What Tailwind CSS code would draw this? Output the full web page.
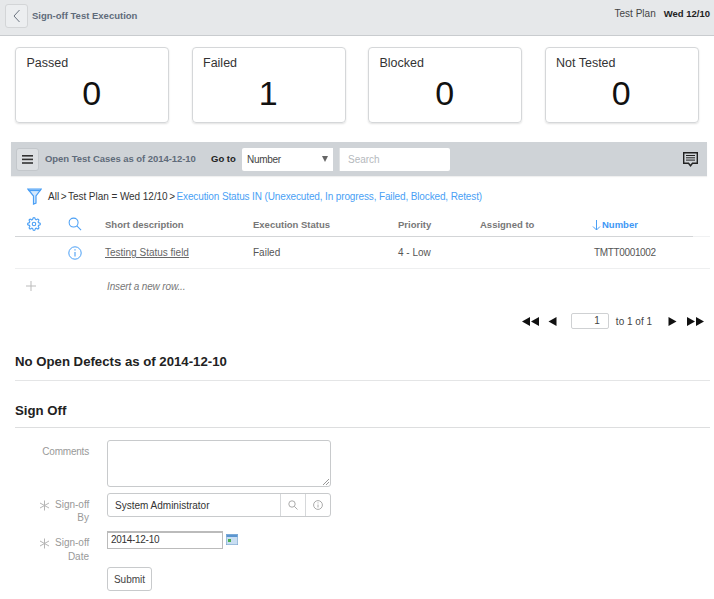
<!DOCTYPE html>
<html><head><meta charset="utf-8">
<script src="https://cdn.jsdelivr.net/npm/@tailwindcss/browser@4"></script>
</head>
<body class="bg-white font-['Liberation_Sans',Arial,sans-serif] text-[#333] w-[714px] h-[599px] overflow-hidden">
<header class="h-9 bg-[#e6e8ea] border-b border-[#c9cccf] flex items-start pl-[5px] pr-[4px]">
  <button class="mt-[4px] w-[23px] h-[24px] border border-[#d3d5d7] rounded-[3px] bg-[#eceef0] flex items-center justify-center">
    <svg width="8" height="14" viewBox="0 0 8 14" fill="none" stroke="#6b7480" stroke-width="1"><path d="M6.5 1 L1 7 L6.5 13"/></svg>
  </button>
  <span class="mt-[10px] leading-[12px] ml-[4px] text-[9.5px] font-bold text-[#5f6b7a]">Sign-off Test Execution</span>
  <span class="mt-[8px] leading-[12px] ml-auto text-[10px] text-[#444]">Test Plan</span>
  <span class="mt-[8px] leading-[12px] ml-[8px] text-[9.5px] font-bold text-[#222]">Wed 12/10</span>
</header>
<section class="flex pl-[15px] pt-[11px] gap-[22.5px]">
  <div class="w-[154px] h-[76px] border border-[#d5d7d9] rounded-[4px] shadow-[0_1px_2px_rgba(0,0,0,0.12)] pl-[10.5px] pt-[8px]"><div class="text-[12.5px] leading-[15px] text-[#333]">Passed</div><div class="text-[34px] leading-[37px] text-center text-[#111] pr-[11px] mt-[4px]">0</div></div>
  <div class="w-[154px] h-[76px] border border-[#d5d7d9] rounded-[4px] shadow-[0_1px_2px_rgba(0,0,0,0.12)] pl-[10.5px] pt-[8px]"><div class="text-[12.5px] leading-[15px] text-[#333]">Failed</div><div class="text-[34px] leading-[37px] text-center text-[#111] pr-[11px] mt-[4px]">1</div></div>
  <div class="w-[154px] h-[76px] border border-[#d5d7d9] rounded-[4px] shadow-[0_1px_2px_rgba(0,0,0,0.12)] pl-[10.5px] pt-[8px]"><div class="text-[12.5px] leading-[15px] text-[#333]">Blocked</div><div class="text-[34px] leading-[37px] text-center text-[#111] pr-[11px] mt-[4px]">0</div></div>
  <div class="w-[154px] h-[76px] border border-[#d5d7d9] rounded-[4px] shadow-[0_1px_2px_rgba(0,0,0,0.12)] pl-[10.5px] pt-[8px]"><div class="text-[12.5px] leading-[15px] text-[#333]">Not Tested</div><div class="text-[34px] leading-[37px] text-center text-[#111] pr-[11px] mt-[4px]">0</div></div>
</section>
<section class="ml-[11px] mt-[19px] w-[696px] h-[34px] bg-[#cfd3d7] flex items-center pl-[5px] pr-[9px] shadow-[0_1px_1px_rgba(0,0,0,0.06)]">
  <button class="w-[23px] h-[23px] border border-[#c3c7cb] rounded-[3px] bg-[#dcdfe2] flex items-center justify-center">
    <svg width="11" height="9" viewBox="0 0 11 9" fill="#333"><rect width="11" height="1.6"/><rect y="3.6" width="11" height="1.6"/><rect y="7.2" width="11" height="1.6"/></svg>
  </button>
  <span class="ml-[6px] w-[151px] whitespace-nowrap text-[9.5px] font-bold tracking-[-0.05px] text-[#5f6b7a]">Open Test Cases as of 2014-12-10</span>
  <span class="ml-[15px] w-[25px] text-[9.5px] font-bold text-[#222]">Go to</span>
  <div class="ml-[6px] w-[91px] h-[23px] bg-white rounded-l-[2px] flex items-center justify-between pl-[5px] pr-[5px] text-[10px] tracking-[-0.3px] text-[#444]"><span>Number</span><span class="w-0 h-0 border-x-[3px] border-x-transparent border-t-[6px] border-t-[#666]"></span></div>
  <div class="ml-[6px] w-[111px] h-[23px] bg-white border-l border-[#dfe1e3] rounded-r-[2px] flex items-center pl-[8px] text-[10px] text-[#b5b9bd]">Search</div>
  <svg class="ml-auto" width="15" height="15" viewBox="0 0 15 15" fill="none" stroke="#222"><path d="M0.7 0.7H14.3V11.3H9.5L7.5 13.8L5.5 11.3H0.7Z" stroke-width="1.4"/><path d="M3 3.5H12M3 5.8H12M3 8.1H12" stroke-width="1"/></svg>
</section>
<div class="flex items-center h-[38px] pt-[2px] pl-[27px] text-[10px]">
  <svg width="15" height="17" viewBox="0 0 15 17" fill="none" stroke="#4a9ff5" stroke-width="1.2"><path d="M0.8 1 H14.2 L9 8 V15 L6.5 16 V8 Z" fill="#d5e9fd"/><path d="M1.5 2.4H13.5" stroke-width="1.4"/></svg>
  <span class="ml-[6px] text-[#333]">All</span><span class="mx-[1.5px] text-[#333]">&gt;</span><span class="text-[#333] tracking-[-0.05px]">Test Plan = Wed 12/10</span><span class="mx-[1.5px] text-[#333]">&gt;</span><span class="tracking-[-0.13px] text-[#4a9ff5]">Execution Status IN (Unexecuted, In progress, Failed, Blocked, Retest)</span>
</div>
<section class="relative">
  <div class="ml-[15px] mr-[4px] h-[23px] border-b border-[#f0f1f2]">
    <div class="mr-[17px] h-[23px] border-b border-[#d3d5d7] flex items-center text-[9.5px] font-bold text-[#777]">
      <div class="w-[38px] pl-[12px] flex -mt-[2px]"><svg width="14" height="14" viewBox="0 0 24 24" fill="none" stroke="#4a9ff5" stroke-width="1.9" stroke-linecap="round" stroke-linejoin="round"><circle cx="12" cy="12" r="3"/><path d="M19.4 15a1.65 1.65 0 0 0 .33 1.82l.06.06a2 2 0 1 1-2.83 2.83l-.06-.06a1.65 1.65 0 0 0-2.82 1.17V21a2 2 0 0 1-4 0v-.09A1.65 1.65 0 0 0 7.2 19.7l-.06.06a2 2 0 1 1-2.83-2.83l.06-.06A1.65 1.65 0 0 0 3.2 14H3a2 2 0 0 1 0-4h.09A1.65 1.65 0 0 0 4.3 7.2l-.06-.06a2 2 0 1 1 2.83-2.83l.06.06A1.65 1.65 0 0 0 10 3.2V3a2 2 0 0 1 4 0v.09a1.65 1.65 0 0 0 2.8 1.21l.06-.06a2 2 0 1 1 2.83 2.83l-.06.06A1.65 1.65 0 0 0 20.8 10H21a2 2 0 0 1 0 4h-.09a1.65 1.65 0 0 0-1.51 1z"/></svg></div>
      <div class="w-[52px] pl-[15px] flex -mt-[2px]"><svg width="14" height="14" viewBox="0 0 15 15" fill="none" stroke="#4a9ff5" stroke-width="1.1"><circle cx="6" cy="6" r="4.8"/><path d="M9.5 9.5L14 14"/></svg></div>
      <div class="w-[148px]">Short description</div>
      <div class="w-[145px]">Execution Status</div>
      <div class="w-[82px]">Priority</div>
      <div class="w-[112px]">Assigned to</div>
      <div class="flex items-center text-[#3e97f5]"><svg width="9" height="12" viewBox="0 0 9 12" fill="none" stroke="#4a9ff5"><path d="M4.5 1V11M1 7.5L4.5 11L8 7.5"/></svg><span class="ml-[1px]">Number</span></div>
    </div>
  </div>
  <div class="ml-[15px] mr-[4px] h-[32px] border-b border-[#eeeff0] flex items-center text-[10px] text-[#555]">
    <div class="w-[38px]"></div>
    <div class="w-[52px] pl-[15px] flex"><svg width="14" height="14" viewBox="0 0 14 14" fill="none" stroke="#4a9ff5"><circle cx="7" cy="7" r="6.2"/><path d="M7 6V10.5" stroke-width="1.1"/><path d="M7 3.2V4.6" stroke-width="1.2"/></svg></div>
    <div class="w-[148px] underline text-[#666]">Testing Status field</div>
    <div class="w-[145px]">Failed</div>
    <div class="w-[82px]">4 - Low</div>
    <div class="w-[112px]"></div>
    <div class="ml-[2px] tracking-[-0.35px] text-[#555]">TMTT0001002</div>
  </div>
  <div class="ml-[15px] h-[34px] flex items-center text-[10px] tracking-[-0.15px] italic text-[#777]">
    <div class="w-[92px] pl-[11px] flex"><svg width="10" height="10" viewBox="0 0 10 10" stroke="#bbb" fill="none"><path d="M5 0V10M0 5H10"/></svg></div>
    <div>Insert a new row...</div>
  </div>
</section>
<nav class="mt-[9px] pr-[10px] flex justify-end items-center h-[18px] text-[10px] text-[#444]">
  <svg width="17" height="9" viewBox="0 0 17 9" fill="#111"><path d="M8 0V9L0 4.5ZM17 0V9L9 4.5Z"/></svg>
  <svg class="ml-[9px]" width="9" height="9" viewBox="0 0 9 9" fill="#111"><path d="M8.5 0V9L0.5 4.5Z"/></svg>
  <div class="ml-[14px] w-[38px] h-[16px] border border-[#cfd1d3] rounded-[2px] text-right pr-[8px] leading-[14px]">1</div>
  <span class="ml-[7px]">to 1 of 1</span>
  <svg class="ml-[16px]" width="9" height="9" viewBox="0 0 9 9" fill="#111"><path d="M0.5 0V9L8.5 4.5Z"/></svg>
  <svg class="ml-[10px]" width="17" height="9" viewBox="0 0 17 9" fill="#111"><path d="M0 0V9L8 4.5ZM9 0V9L17 4.5Z"/></svg>
</nav>
<h2 class="ml-[15px] mt-[24px] text-[13.2px] font-bold text-[#222] leading-[16px]">No Open Defects as of 2014-12-10</h2>
<div class="ml-[15px] mr-[4px] mt-[10px] border-b border-[#e4e5e6]"></div>
<h2 class="ml-[15px] mt-[22px] text-[13.2px] font-bold text-[#222] leading-[16px]">Sign Off</h2>
<div class="ml-[15px] mr-[4px] mt-[8px] border-b border-[#dddedf]"></div>
<form class="mt-[12px] text-[10px]">
  <div class="flex">
    <div class="w-[89px] text-right text-[#999] pt-[4px] tracking-[-0.2px]">Comments</div>
    <div class="relative ml-[18px] w-[224px] h-[47px] border border-[#c8cacc] rounded-[3px]">
      <svg class="absolute right-[1px] bottom-[1px]" width="7" height="7" viewBox="0 0 7 7" stroke="#999" fill="none"><path d="M1 7L7 1M4 7L7 4"/></svg>
    </div>
  </div>
  <div class="flex mt-[6px] h-[24px]">
    <div class="w-[89px] flex justify-end text-[#999] pt-[5px] leading-[13px]">
      <svg class="mr-[5px] mt-[2px]" width="11" height="11" viewBox="0 0 11 11" stroke="#b5b5b5" stroke-width="1" fill="none"><path d="M5.5 0.5V10.5M1 3L10 8M10 3L1 8"/></svg>
      <div class="w-[34px] whitespace-nowrap text-right">Sign-off<br>By</div>
    </div>
    <div class="ml-[18px] w-[224px] h-[24px] border border-[#c8cacc] rounded-[3px] flex items-center">
      <div class="flex-1 pl-[7px] text-[10px] text-[#333]">System Administrator</div>
      <div class="w-[25px] h-full border-l border-[#d6d8da] flex items-center justify-center"><svg width="10" height="10" viewBox="0 0 10 10" fill="none" stroke="#aaa"><circle cx="4" cy="4" r="3.2"/><path d="M6.3 6.3L9.5 9.5"/></svg></div>
      <div class="w-[25px] h-full border-l border-[#d6d8da] flex items-center justify-center"><svg width="10" height="10" viewBox="0 0 10 10" fill="none" stroke="#aaa"><circle cx="5" cy="5" r="4.4"/><path d="M5 4.5V7.5M5 2.4V3.4"/></svg></div>
    </div>
  </div>
  <div class="flex mt-[14px] h-[18px]">
    <div class="w-[89px] flex justify-end text-[#999] pt-[5px] leading-[14px]">
      <svg class="mr-[5px] mt-[2px]" width="11" height="11" viewBox="0 0 11 11" stroke="#b5b5b5" stroke-width="1" fill="none"><path d="M5.5 0.5V10.5M1 3L10 8M10 3L1 8"/></svg>
      <div class="w-[34px] whitespace-nowrap text-right">Sign-off<br>Date</div>
    </div>
    <div class="ml-[18px] w-[116px] h-[18px] border border-[#bbb] border-t-2 text-[10px] tracking-[-0.3px] text-[#333] pl-[3px] leading-[14px]">2014-12-10</div>
    <svg class="ml-[3px] mt-[3px]" width="12" height="11" viewBox="0 0 12 11"><rect width="12" height="11" fill="#c9def2" stroke="#6f9cc9"/><rect x="0.5" y="0.5" width="11" height="2.5" fill="#5a95d0"/><rect x="2" y="5" width="3" height="3" fill="#4caf50"/></svg>
  </div>
  <button type="button" class="block ml-[107px] mt-[18px] w-[45px] h-[24px] border border-[#c8cacc] rounded-[3px] text-[10px] text-[#444]">Submit</button>
</form>
</body></html>
